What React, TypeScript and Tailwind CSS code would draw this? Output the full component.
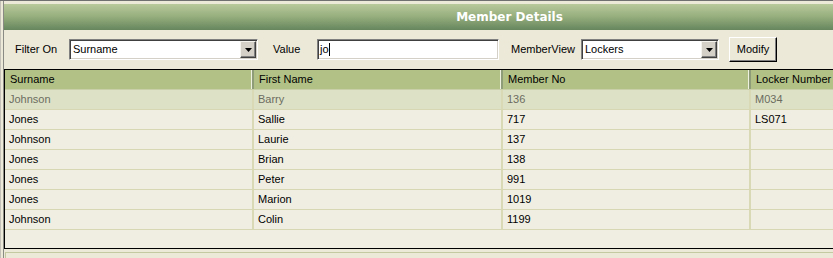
import React from "react";

const rows: string[][] = [
  ["Johnson", "Barry", "136", "M034"],
  ["Jones", "Sallie", "717", "LS071"],
  ["Johnson", "Laurie", "137", ""],
  ["Jones", "Brian", "138", ""],
  ["Jones", "Peter", "991", ""],
  ["Jones", "Marion", "1019", ""],
  ["Johnson", "Colin", "1199", ""],
];

function Arrow() {
  return (
    <div className="mr-[1px] flex h-[17px] w-[16px] items-center justify-center border border-t-[#f4f3ee] border-l-[#f4f3ee] border-r-[#404040] border-b-[#404040] bg-[#d4d0c8] shadow-[inset_-1px_-1px_0_#808080]">
      <svg width="7" height="4" viewBox="0 0 7 4">
        <polygon points="0,0 7,0 3.5,4" fill="#000" />
      </svg>
    </div>
  );
}

function Combo({ className, value }: { className: string; value: string }) {
  return (
    <div
      className={`flex h-[21px] items-center border border-t-[#808080] border-l-[#808080] border-r-white border-b-white bg-white shadow-[inset_1px_1px_0_#404040,inset_-1px_-1px_0_#d4d0c8] ${className}`}
    >
      <span className="flex-1 pl-[3px] leading-none">{value}</span>
      <Arrow />
    </div>
  );
}

export default function App() {
  const cols = ["w-[249px]", "w-[249px]", "w-[248px]", "flex-1"];
  const headers = ["Surname", "First Name", "Member No", "Locker Number"];
  return (
    <div className="flex h-[258px] w-[833px] overflow-hidden border-t border-[#707070] bg-[#ece9d8] font-['Liberation_Sans',Arial,sans-serif] text-[11px] text-black">
      <div className="w-[3px] shrink-0 border-l border-[#c4c2b8]" />
      <div className="flex w-[1012px] shrink-0 flex-col border-l border-[#8a8a84] pt-[3px]">
        {/* title bar */}
        <div className="flex h-[26px] shrink-0 items-center justify-center bg-linear-to-b from-[#b9c99b] via-[#95ad7c] to-[#66865e] font-['DejaVu_Sans',sans-serif] text-[12px] font-bold text-white">
          Member Details
        </div>
        {/* toolbar */}
        <div className="flex h-[39px] shrink-0 items-center">
          <span className="ml-[11px] w-[54px]">Filter On</span>
          <Combo className="w-[189px]" value="Surname" />
          <span className="ml-[15px] w-[44px]">Value</span>
          <div className="flex h-[21px] w-[182px] items-center border border-t-[#808080] border-l-[#808080] border-r-white border-b-white bg-white pl-[2px] shadow-[inset_1px_1px_0_#404040,inset_-1px_-1px_0_#d4d0c8]">
            <span className="leading-none">jo</span>
            <span className="h-[13px] w-[1px] bg-black" />
          </div>
          <span className="ml-[12px] w-[70px]">MemberView</span>
          <Combo className="w-[138px]" value="Lockers" />
          <div className="ml-[10px] flex h-[25px] w-[48px] items-center justify-center border border-t-white border-l-white border-r-black border-b-black bg-[#ece9d8] shadow-[inset_-1px_-1px_0_#808080]">
            Modify
          </div>
        </div>
        {/* grid */}
        <div className="flex h-[180px] shrink-0 flex-col border-t border-b border-l border-black bg-[#f0eee2]">
          <div className="flex h-[20px] shrink-0 border-b border-[#c9d0a9] bg-[#b2c286]">
            {headers.map((h, i) => (
              <div
                key={h}
                className={`flex items-center pl-[5px] ${cols[i]} ${i < 3 ? "border-r-2 border-r-[#8f9c78] shadow-[inset_-1px_0_0_#eef0e0]" : ""}`}
              >
                {h}
              </div>
            ))}
          </div>
          {rows.map((r, ri) => (
            <div
              key={ri}
              className={`flex h-[20px] shrink-0 border-b border-[#d7d8b3] ${ri === 0 ? "bg-[#dde2c7] text-[#6c6c60]" : ""}`}
            >
              {r.map((c, i) => (
                <div
                  key={i}
                  className={`flex items-center pl-[4px] ${cols[i]} ${i < 3 ? "border-r-2 border-r-[#d9dab5]" : ""}`}
                >
                  {c}
                </div>
              ))}
            </div>
          ))}
        </div>
        <div className="ml-[1px] mt-[3px] flex-1 border-t border-l border-[#c5c9a2]" />
      </div>
    </div>
  );
}
